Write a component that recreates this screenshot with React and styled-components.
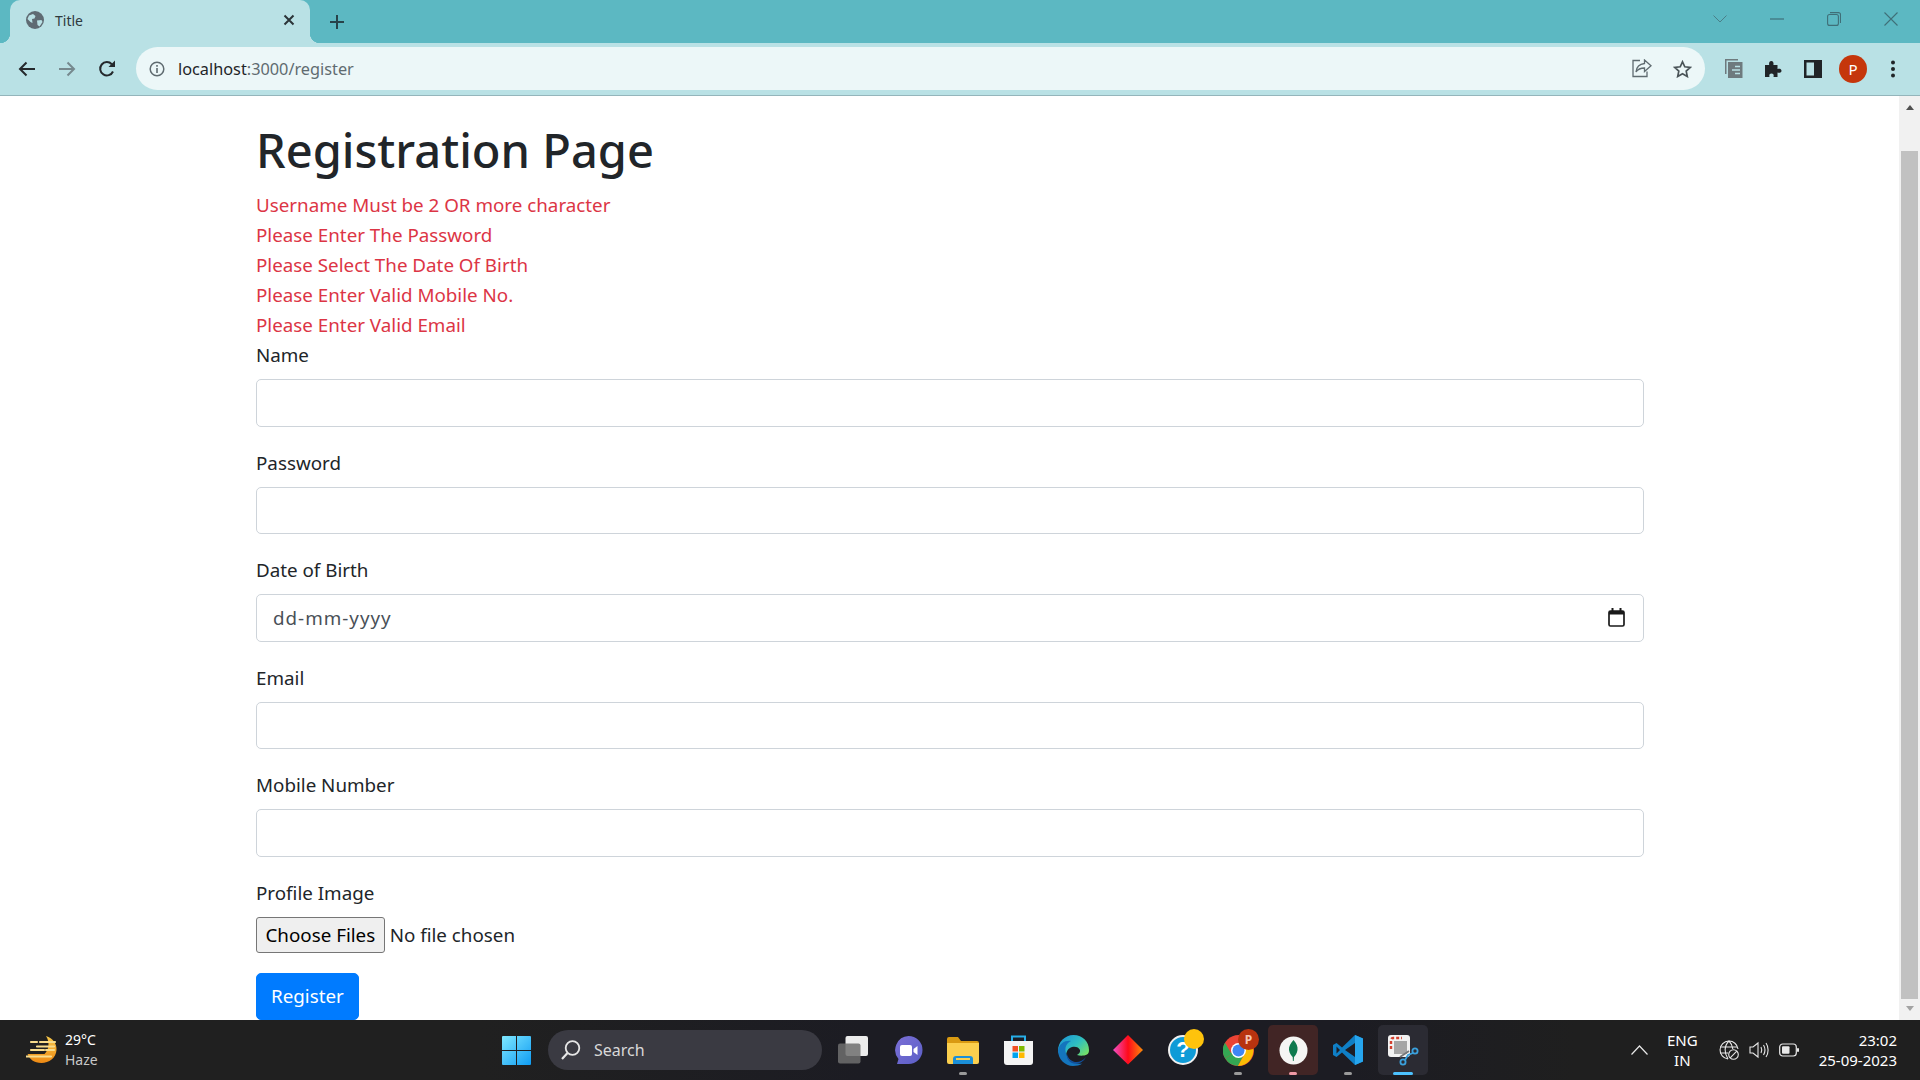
import React from "react";
import styled, { createGlobalStyle } from "styled-components";

const GlobalStyle = createGlobalStyle`
  html, body { margin: 0; padding: 0; height: 100%; overflow: hidden; }
  #root { height: 100%; }
  * { box-sizing: border-box; }
  body { font-family: "Noto Sans", "Open Sans", sans-serif; color: #212529; }
`;

const ui = `"Noto Sans", "Open Sans", sans-serif`;

const GlobeIcon = () => (
  <svg width="18" height="18" viewBox="0 0 18 18">
    <circle cx="9" cy="9" r="9" fill="#5f6b73" />
    <path d="M3 4.500 7 3l2.500 2-1 2.500-2.500.5L6.500 12 4.500 11 1.500 8zM11 9.500l4.500-.5 1 2-3 4.500-2-1.500z" fill="#b9e1e5" />
  </svg>
);
const CloseIcon = () => (
  <svg width="12" height="12" viewBox="0 0 12 12" stroke="#2b3438" strokeWidth="2">
    <path d="M1.500 1.500l9 9M10.500 1.500l-9 9" />
  </svg>
);
const PlusIcon = () => (
  <svg width="16" height="16" viewBox="0 0 16 16" stroke="#27434a" strokeWidth="2">
    <path d="M8 1v14M1 8h14" />
  </svg>
);
const ArrowIcon = ({ flip, color }) => (
  <svg width="18" height="16" viewBox="0 0 18 16" fill="none" stroke={color} strokeWidth="2" style={flip ? { transform: "scaleX(-1)" } : undefined}>
    <path d="M17 8H2M8.500 1.500 2 8l6.500 6.500" />
  </svg>
);
const ReloadIcon = () => (
  <svg width="18" height="18" viewBox="0 0 18 18" fill="none">
    <path d="M15 11.500A6.700 6.700 0 1 1 13.800 4.200" stroke="#25292c" strokeWidth="2" />
    <path d="M10.500 7H17V.5z" fill="#25292c" />
  </svg>
);
const InfoIcon = () => (
  <svg width="16" height="16" viewBox="0 0 16 16" fill="none">
    <circle cx="8" cy="8" r="6.800" stroke="#5f6b70" strokeWidth="1.500" />
    <path d="M8 7v5M8 4v1.800" stroke="#5f6b70" strokeWidth="1.600" />
  </svg>
);
const ShareIcon = () => (
  <svg width="20" height="19" viewBox="0 0 20 19" fill="none" stroke="#5f6b70" strokeWidth="1.300">
    <path d="M8 1.500H1v16h14v-5" />
    <path d="M12.500 1v3.500C7.500 5 4.500 8 4 13c2-3 4.500-4 8.500-4v3.500L19 6.800z" />
  </svg>
);
const StarIcon = () => (
  <svg width="19" height="18" viewBox="0 0 19 18" fill="none" stroke="#4a5458" strokeWidth="1.700">
    <path d="m9.500 1.800 2.300 5 5.400.6-4 3.700 1.100 5.400-4.800-2.700-4.800 2.700 1.100-5.400-4-3.700 5.400-.6z" />
  </svg>
);
const DocsIcon = () => (
  <svg width="19" height="21" viewBox="0 0 19 21">
    <path d="M1 1h13v1.500H2.500V16H1z" fill="#6e7a7e" />
    <path d="M4 4h14.500v16H4z" fill="#6e7a7e" />
    <path d="M11 8.500h5M8 12h8M11 15.500h5" stroke="#b9e1e5" strokeWidth="1.600" />
  </svg>
);
const PuzzleIcon = () => (
  <svg width="18" height="18" viewBox="0 0 18 18">
    <path d="M1 5h4.200C4.700 2.800 5.500 1 7.300 1s2.600 1.800 2.100 4H13.500v4c2-.6 4-.1 4 1.800s-2 2.400-4 1.800V17H9.500c.6-2-.2-3.400-2-3.400s-2.600 1.400-2 3.400H1z" fill="#202427" />
  </svg>
);
const PanelIcon = () => (
  <svg width="18" height="18" viewBox="0 0 18 18">
    <path d="M0 0h18v18H0zM2.500 2.500v13H10v-13z" fill="#202427" fillRule="evenodd" />
  </svg>
);
const KebabIcon = () => (
  <svg width="4" height="18" viewBox="0 0 4 18" fill="#202427">
    <circle cx="2" cy="2.500" r="2" />
    <circle cx="2" cy="9" r="2" />
    <circle cx="2" cy="15.500" r="2" />
  </svg>
);
const CalendarIcon = () => (
  <svg width="17" height="19" viewBox="0 0 17 19" fill="none">
    <rect x="1" y="3" width="15" height="15" rx="1.500" stroke="#1a1a1a" strokeWidth="1.700" />
    <path d="M1 3h15v3.500H1zM3.500 0h2v3h-2zM11.500 0h2v3h-2z" fill="#1a1a1a" />
  </svg>
);

const Chevron = () => (
  <svg width="14" height="8" viewBox="0 0 14 8" fill="none" stroke="#4a7f88" strokeWidth="1"><path d="m.5.5 6.500 6.500L13.500.5" /></svg>
);
const Minimize = () => (
  <svg width="14" height="2" viewBox="0 0 14 2" stroke="#3f6f78" strokeWidth="1.200"><path d="M0 1h14" /></svg>
);
const Restore = () => (
  <svg width="14" height="14" viewBox="0 0 14 14" fill="none" stroke="#3f6f78" strokeWidth="1.100">
    <rect x=".6" y="2.500" width="10.800" height="10.900" rx="2" />
    <path d="M3 .6h8.500a2 2 0 0 1 2 2V11" />
  </svg>
);
const CloseWin = () => (
  <svg width="14" height="14" viewBox="0 0 14 14" stroke="#3f6f78" strokeWidth="1.100"><path d="m.5.5 13 13M13.500.5l-13 13" /></svg>
);

const WeatherIcon = () => (
  <svg width="31" height="28" viewBox="0 0 31 28">
    <defs>
      <linearGradient id="moon" x1="0" y1="0" x2="0" y2="1">
        <stop offset="0" stopColor="#f7c84a" />
        <stop offset="1" stopColor="#ee8a14" />
      </linearGradient>
    </defs>
    <path d="M20 0c7 2 11 8 10.500 14C30 22 23 27 15.500 27 8 27 3.500 23 1.500 18h17C23 14 24 6 20 0z" fill="url(#moon)" />
    <path d="M5 6h6M14 6h15M11 10.500h17M5 14h13M20 14h8M0 20.500h25" stroke="#f8dc8c" strokeWidth="2.200" strokeLinecap="round" />
  </svg>
);
const WinLogo = () => (
  <svg width="29" height="29" viewBox="0 0 29 29">
    <defs>
      <linearGradient id="win" x1="0" y1="0" x2="1" y2="1">
        <stop offset="0" stopColor="#7fe8ff" />
        <stop offset="1" stopColor="#0f9cf3" />
      </linearGradient>
    </defs>
    <path d="M0 1a1 1 0 0 1 1-1h13v14H0zM15 0h13a1 1 0 0 1 1 1v13H15zM0 15h14v14H1a1 1 0 0 1-1-1zM15 15h14v13a1 1 0 0 1-1 1H15z" fill="url(#win)" />
  </svg>
);
const SearchGlass = () => (
  <svg width="20" height="20" viewBox="0 0 20 20" fill="none" stroke="#e6e6e6" strokeWidth="1.800">
    <circle cx="11.500" cy="8" r="6.800" />
    <path d="M6.500 13 1 19" strokeWidth="2.200" />
  </svg>
);
const TaskViewIcon = () => (
  <svg width="30" height="28" viewBox="0 0 30 28">
    <rect x="7.500" y="0" width="22.500" height="20" rx="2" fill="#ececec" />
    <rect x="0" y="7.500" width="22.500" height="20" rx="2" fill="#6e6e6e" fillOpacity=".85" />
  </svg>
);
const TeamsIcon = () => (
  <svg width="29" height="29" viewBox="0 0 29 29">
    <defs>
      <linearGradient id="teams" x1="0" y1="0" x2="1" y2="1">
        <stop offset="0" stopColor="#7b6fd6" />
        <stop offset="1" stopColor="#5b5fc7" />
      </linearGradient>
    </defs>
    <path d="M14.500 0a14 14 0 0 1 0 28H3l1.500-5A14 14 0 0 1 14.500 0z" fill="url(#teams)" />
    <rect x="6" y="9" width="12" height="11" rx="2" fill="#fff" />
    <path d="m19.500 13 4-3v9l-4-3z" fill="#fff" />
  </svg>
);
const FolderIcon = () => (
  <svg width="32" height="27" viewBox="0 0 32 27">
    <path d="M0 2a2 2 0 0 1 2-2h9l3 4h16a2 2 0 0 1 2 2v4H0z" fill="#d99a12" />
    <path d="M0 6h32v19a2 2 0 0 1-2 2H2a2 2 0 0 1-2-2z" fill="#fbcf4e" />
    <path d="M6 27v-5a3 3 0 0 1 3-3h14a3 3 0 0 1 3 3v5z" fill="#1b8fd8" />
    <path d="M9 22h14" stroke="#fbcf4e" strokeWidth="2" />
  </svg>
);
const StoreIcon = () => (
  <svg width="29" height="30" viewBox="0 0 29 30">
    <path d="M8 6V1.500h13V6" fill="none" stroke="#27aee8" strokeWidth="2" />
    <path d="M0 6h29v21a3 3 0 0 1-3 3H3a3 3 0 0 1-3-3z" fill="#f4f4f4" />
    <rect x="8.500" y="11" width="5.500" height="5.500" fill="#f25022" />
    <rect x="15" y="11" width="5.500" height="5.500" fill="#7fba00" />
    <rect x="8.500" y="17.500" width="5.500" height="5.500" fill="#00a4ef" />
    <rect x="15" y="17.500" width="5.500" height="5.500" fill="#ffb900" />
  </svg>
);
const EdgeIcon = () => (
  <svg width="31" height="31" viewBox="0 0 31 31">
    <defs>
      <linearGradient id="edgeTop" x1="0" y1="0" x2="1" y2=".8">
        <stop offset="0" stopColor="#1a8fd8" />
        <stop offset=".55" stopColor="#2fbfc0" />
        <stop offset="1" stopColor="#7de35e" />
      </linearGradient>
    </defs>
    <path d="M15.500 0C25 0 31 7 31 15c0 2-.5 3.500-2 4.500-3 1.500-7 1.500-10 .5 2-1 3.500-3 3-5-1-3-5-4-8-3-5 1.500-7 7-5 11.500C6 21 0 20 0 15.500 0 7 7 0 15.500 0z" fill="url(#edgeTop)" />
    <path d="M0 15.500C1 8 8 5 13 6c-4 2-6 5-5.500 10 .5 7 8 14 17 12.500-3 1.800-6 2.500-9.500 2.500C7 31 0 24 0 15.500z" fill="#1475bd" />
    <path d="M28 22c-3 6-9 8-14 6-4-2-6-6-5-10 0 4 3 8 8 9 4 .5 8-1 11-5z" fill="#114f9c" />
  </svg>
);
const DiamondIcon = () => (
  <svg width="30" height="30" viewBox="0 0 30 30">
    <defs>
      <linearGradient id="diamond" x1="0" y1="0" x2="1" y2="0">
        <stop offset="0" stopColor="#f050c8" />
        <stop offset=".5" stopColor="#ff0a1a" />
        <stop offset="1" stopColor="#f98c0a" />
      </linearGradient>
    </defs>
    <path d="M15 0 30 15 15 29.500 0 15z" fill="url(#diamond)" />
  </svg>
);
const ChromeIcon = () => (
  <svg width="31" height="31" viewBox="0 0 31 31">
    <circle cx="15.500" cy="15.500" r="15.500" fill="#ea4335" />
    <path d="M15.500 15.500 2 23.300A15.500 15.500 0 0 1 2 7.700L8 18z" fill="#34a853" />
    <path d="M2.100 23.300 15.500 15.500l6 3-6.500 12.500A15.500 15.500 0 0 1 2.100 23.300z" fill="#34a853" />
    <path d="M15.500 9h13.500A15.500 15.500 0 0 1 15 31l6.500-12z" fill="#fbbc04" />
    <circle cx="15.500" cy="15.500" r="7.500" fill="#fff" />
    <circle cx="15.500" cy="15.500" r="6" fill="#3f86f4" />
  </svg>
);
const LeafIcon = () => (
  <svg width="29" height="29" viewBox="0 0 29 29">
    <circle cx="14.500" cy="14.500" r="14" fill="#f5f5f3" />
    <path d="M14.500 4c3 3.500 4.500 6.500 4 10-.5 3.500-2.500 6-3.500 7l-.3 4h-.8l-.2-4c-1-1-3.200-3.500-3.700-7-.4-3.500 1.500-6.500 4.500-10z" fill="#0f7a4e" />
  </svg>
);
const VsCodeIcon = () => (
  <svg width="30" height="30" viewBox="0 0 30 30">
    <path d="M22 0 30 3.500v23L22 30 9 17.500 3.500 22 0 20v-10l3.500-2L9 12.500z" fill="#0f7fc6" />
    <path d="M22 8 12 15l10 7zM3.500 11.500v7L7 15z" fill="#1d1d24" />
    <path d="M22 0 30 3.500v23L22 30z" fill="#26a5ee" />
  </svg>
);
const SnipIcon = () => (
  <svg width="31" height="31" viewBox="0 0 31 31" fill="none">
    <rect x="0" y="0" width="22" height="22" rx="3" fill="#f2f2f2" />
    <path d="M3 14V5a2 2 0 0 1 2-2h9" stroke="#d2402f" strokeWidth="2.400" strokeDasharray="3 2" />
    <rect x="6" y="6" width="13" height="13" fill="#a6a6a6" />
    <path d="m12 22 9-6" stroke="#777" strokeWidth="1.800" />
    <circle cx="27" cy="16" r="2.600" stroke="#3aa0dc" strokeWidth="1.800" />
    <circle cx="15" cy="27" r="2.600" stroke="#3aa0dc" strokeWidth="1.800" />
    <path d="m25 18-5 2-3 5" stroke="#3aa0dc" strokeWidth="1.800" />
  </svg>
);
const TrayUp = () => (
  <svg width="17" height="10" viewBox="0 0 17 10" fill="none" stroke="#e8e8e8" strokeWidth="1.200"><path d="m.5 9.500 8-8.500 8 8.500" /></svg>
);
const GlobeOff = () => (
  <svg width="20" height="20" viewBox="0 0 20 20" fill="none" stroke="#e8e8e8" strokeWidth="1.100">
    <path d="M9 19A9 9 0 1 1 19 9" />
    <path d="M1 7h17M1 13h8M10 1c-5 5-5 12-1 18M10 1c2.500 2.500 3.500 5 3.800 8" />
    <circle cx="14.500" cy="14.500" r="4.800" fill="#1e1e1e" />
    <path d="m11.200 17.800 6.600-6.600" />
  </svg>
);
const Speaker = () => (
  <svg width="20" height="18" viewBox="0 0 20 18" fill="none" stroke="#e8e8e8" strokeWidth="1.100">
    <path d="M1 6v6h3l5 4V2L4 6z" />
    <path d="M12 6c1 2 1 4 0 6M14.500 4c1.800 3 1.800 7 0 10M17 2c2.800 4 2.800 10 0 14" />
  </svg>
);
const Battery = () => (
  <svg width="20" height="14" viewBox="0 0 20 14" fill="none">
    <rect x=".7" y="1" width="16.600" height="12" rx="3" stroke="#e8e8e8" strokeWidth="1.200" />
    <rect x="3" y="3.300" width="7.500" height="7.400" rx="1" fill="#e8e8e8" />
    <rect x="18" y="5" width="2" height="4" rx="1" fill="#e8e8e8" />
  </svg>
);

const fields = ["Name", "Password", "Date of Birth", "Email", "Mobile Number"];
const errors = [
  "Username Must be 2 OR more character",
  "Please Enter The Password",
  "Please Select The Date Of Birth",
  "Please Enter Valid Mobile No.",
  "Please Enter Valid Email",
];

const App = () => {
  const taskItems = [
    { icon: <TaskViewIcon /> },
    { icon: <TeamsIcon /> },
    { icon: <FolderIcon />, dot: "#9a9a9a" },
    { icon: <StoreIcon /> },
    { icon: <EdgeIcon /> },
    { icon: <DiamondIcon /> },
    { icon: <HelpCircle>?</HelpCircle>, badge: <YellowBadge /> },
    { icon: <ChromeIcon />, dot: "#9a9a9a", badge: <ProfileBadge>P</ProfileBadge> },
    { icon: <LeafIcon />, dot: "#ee9aa6", tint: "#412525" },
    { icon: <VsCodeIcon />, dot: "#9a9a9a" },
    { icon: <SnipIcon />, dot: "#4cc2ff", wide: true, tint: "#2b2b33" },
  ];

  return (
    <Screen>
      <GlobalStyle />
      <TabStrip>
        <Tab>
          <GlobeIcon />
          <TabTitle>Title</TabTitle>
          <CloseIcon />
        </Tab>
        <NewTab><PlusIcon /></NewTab>
        <WindowControls>
          <WinButton><Chevron /></WinButton>
          <WinButton><Minimize /></WinButton>
          <WinButton><Restore /></WinButton>
          <WinButton><CloseWin /></WinButton>
        </WindowControls>
      </TabStrip>
      <Toolbar>
        <NavButton><ArrowIcon color="#25292c" /></NavButton>
        <NavButton><ArrowIcon flip color="#76898e" /></NavButton>
        <NavButton><ReloadIcon /></NavButton>
        <Omnibox>
          <InfoIcon />
          <Url>localhost<UrlRest>:3000/register</UrlRest></Url>
          <NavButton><ShareIcon /></NavButton>
          <NavButton><StarIcon /></NavButton>
        </Omnibox>
        <Extensions>
          <NavButton><DocsIcon /></NavButton>
          <NavButton><PuzzleIcon /></NavButton>
          <NavButton><PanelIcon /></NavButton>
          <NavButton><Avatar>P</Avatar></NavButton>
          <NavButton><KebabIcon /></NavButton>
        </Extensions>
      </Toolbar>
      <Viewport>
        <Page>
          <Heading>Registration Page</Heading>
          {errors.map((err) => (
            <ErrorLine key={err}>{err}</ErrorLine>
          ))}
          {fields.map((name) => (
            <Group key={name}>
              <Label>{name}</Label>
              {name === "Date of Birth" ? (
                <DateBox>
                  <DateText>dd-mm-yyyy</DateText>
                  <CalendarIcon />
                </DateBox>
              ) : (
                <Input type={name === "Password" ? "password" : "text"} />
              )}
            </Group>
          ))}
          <Group>
            <Label>Profile Image</Label>
            <FileRow>
              <FileButton type="button">Choose Files</FileButton>
              <span>No file chosen</span>
            </FileRow>
          </Group>
          <Submit type="button">Register</Submit>
        </Page>
        <Scrollbar>
          <ScrollArrow />
          <ScrollThumb />
          <ScrollArrow $down />
        </Scrollbar>
      </Viewport>
      <Taskbar>
        <Weather>
          <WeatherIcon />
          <WeatherText>
            <span>29°C</span>
            <WeatherSub>Haze</WeatherSub>
          </WeatherText>
        </Weather>
        <Tile><WinLogo /></Tile>
        <SearchPill>
          <SearchGlass />
          <span>Search</span>
        </SearchPill>
        <Tiles>
          {taskItems.map((item, i) => (
            <Tile key={i} $tint={item.tint}>
              {item.icon}
              {item.badge}
              {item.dot && <Dot $color={item.dot} $wide={item.wide} />}
            </Tile>
          ))}
        </Tiles>
        <Tray>
          <TrayUp />
          <Lang>
            <span>ENG</span>
            <span>IN</span>
          </Lang>
          <TrayIcons>
            <GlobeOff />
            <Speaker />
            <Battery />
          </TrayIcons>
          <Clock>
            <span>23:02</span>
            <span>25-09-2023</span>
          </Clock>
        </Tray>
      </Taskbar>
    </Screen>
  );
};

const Screen = styled.div`
  height: 100vh;
  display: flex;
  flex-direction: column;
  overflow: hidden;
  background: #fff;
`;

const TabStrip = styled.div`
  height: 43px;
  flex: none;
  display: flex;
  align-items: flex-end;
  padding-left: 10px;
  background: #5cb8c2;
`;

const Tab = styled.div`
  position: relative;
  width: 300px;
  height: 43px;
  padding: 0 15px 3px 16px;
  display: flex;
  align-items: center;
  gap: 11px;
  background: #b9e1e5;
  border-radius: 10px 10px 0 0;
  font-family: ${ui};
  font-size: 14px;
  color: #2f3a3e;

  &::before,
  &::after {
    content: "";
    position: absolute;
    bottom: 0;
    width: 10px;
    height: 10px;
  }
  &::before {
    left: -10px;
    background: radial-gradient(circle at 0 0, transparent 10px, #b9e1e5 10.5px);
  }
  &::after {
    right: -10px;
    background: radial-gradient(circle at 100% 0, transparent 10px, #b9e1e5 10.5px);
  }
`;

const TabTitle = styled.span`
  flex: 1;
`;

const NewTab = styled.div`
  width: 40px;
  height: 40px;
  margin-left: 7px;
  display: flex;
  align-items: center;
  justify-content: center;
  padding-bottom: 2px;
`;

const WindowControls = styled.div`
  margin-left: auto;
  padding-right: 1px;
  align-self: flex-start;
  display: flex;
`;

const WinButton = styled.div`
  width: 57px;
  height: 37px;
  display: flex;
  align-items: center;
  justify-content: center;
`;

const Toolbar = styled.div`
  height: 53px;
  flex: none;
  display: flex;
  align-items: center;
  padding: 0 7px 1px;
  background: #b9e1e5;
  border-bottom: 1px solid #94b5bb;
`;

const NavButton = styled.div`
  width: 40px;
  height: 40px;
  flex: none;
  display: flex;
  align-items: center;
  justify-content: center;
`;

const Omnibox = styled.div`
  flex: 1;
  height: 43px;
  margin-left: 9px;
  padding: 0 3px 0 13px;
  display: flex;
  align-items: center;
  background: #ecf7f8;
  border-radius: 22px;
`;

const Url = styled.div`
  flex: 1;
  margin-left: 13px;
  padding-top: 1px;
  font-family: ${ui};
  font-size: 16.300px;
  color: #1f2528;
`;

const UrlRest = styled.span`
  color: #5f6b70;
`;

const Extensions = styled.div`
  display: flex;
  margin-left: 8px;
`;

const Avatar = styled.div`
  width: 28px;
  height: 28px;
  border-radius: 50%;
  display: flex;
  align-items: center;
  justify-content: center;
  background: #c5360b;
  color: #fff;
  font-family: ${ui};
  font-size: 15px;
`;

const Viewport = styled.div`
  flex: 1;
  min-height: 0;
  display: flex;
  overflow: hidden;
`;

const Page = styled.div`
  flex: 1;
  min-width: 0;
  padding: 24px 255px 0 256px;
  font-size: 18.800px;
  line-height: 30px;
`;

const Heading = styled.h1`
  margin: 0 0 10px;
  font-size: 47px;
  font-weight: 500;
  line-height: 60px;
`;

const ErrorLine = styled.div`
  color: #dc3545;
`;

const Group = styled.div`
  margin-bottom: 21px;
`;

const Label = styled.label`
  display: block;
  margin-bottom: 9px;
`;

const Input = styled.input`
  display: block;
  width: 100%;
  height: 47.500px;
  padding: 0 16px;
  border: 1px solid #ced4da;
  border-radius: 5px;
  background: #fff;
  outline: none;
`;

const DateBox = styled.div`
  width: 100%;
  height: 47.500px;
  padding: 0 18px 0 16px;
  display: flex;
  align-items: center;
  justify-content: space-between;
  border: 1px solid #ced4da;
  border-radius: 5px;
  color: #495057;
`;

const DateText = styled.span`
  letter-spacing: 1px;
`;

const FileRow = styled.div`
  display: flex;
  align-items: center;
  gap: 5px;
  height: 36px;
`;

const FileButton = styled.button`
  height: 36px;
  padding: 0 8.500px;
  border: 1px solid #767676;
  border-radius: 3px;
  background: #efefef;
  color: #000;
  font: inherit;
`;

const Submit = styled.button`
  display: block;
  height: 47.500px;
  margin-top: -1px;
  padding: 0 14px;
  border: 1px solid #007bff;
  border-radius: 5px;
  background: #007bff;
  color: #fff;
  font: inherit;
`;

const Scrollbar = styled.div`
  width: 21px;
  flex: none;
  display: flex;
  flex-direction: column;
  align-items: center;
  background: #f1f1f1;
`;

const ScrollArrow = styled.div`
  flex: none;
  width: 0;
  height: 0;
  border-left: 4.500px solid transparent;
  border-right: 4.500px solid transparent;
  ${(p) =>
    p.$down
      ? "margin: 7px 0 9px; border-top: 5px solid #a3a3a3;"
      : "margin: 9px 0; border-bottom: 5px solid #505050;"}
`;

const ScrollThumb = styled.div`
  flex: 1;
  width: 17px;
  margin-top: 32px;
  background: #c1c1c1;
`;

const Taskbar = styled.div`
  height: 60px;
  flex: none;
  display: flex;
  align-items: center;
  background: linear-gradient(90deg, #202020 0 25%, #1c1c23 45%, #1c1c23 70%, #1f1f1f 82%);
  font-family: ${ui};
  color: #fff;
`;

const Weather = styled.div`
  width: 491px;
  flex: none;
  padding-left: 26px;
  display: flex;
  align-items: center;
  gap: 8px;
`;

const WeatherText = styled.div`
  display: flex;
  flex-direction: column;
  font-size: 14px;
  line-height: 20px;
`;

const WeatherSub = styled.span`
  color: #c8c8c8;
`;

const Tile = styled.div`
  position: relative;
  width: 50px;
  height: 50px;
  flex: none;
  display: flex;
  align-items: center;
  justify-content: center;
  border-radius: 5px;
  background: ${(p) => p.$tint || "transparent"};
`;

const Tiles = styled.div`
  display: flex;
  gap: 5px;
  margin-left: 6px;
`;

const Dot = styled.div`
  position: absolute;
  bottom: 0;
  left: 50%;
  width: ${(p) => (p.$wide ? "20px" : "8px")};
  height: 3px;
  transform: translateX(-50%);
  border-radius: 2px;
  background: ${(p) => p.$color};
`;

const HelpCircle = styled.div`
  width: 30px;
  height: 30px;
  display: flex;
  align-items: center;
  justify-content: center;
  border: 2px solid #f0f0f0;
  border-radius: 50%;
  background: #0f9bd7;
  color: #fff;
  font-family: "Liberation Sans", sans-serif;
  font-size: 22px;
  font-weight: 700;
`;

const YellowBadge = styled.div`
  position: absolute;
  top: 4px;
  right: 4px;
  width: 20px;
  height: 20px;
  border-radius: 50%;
  background: #fec30c;
`;

const ProfileBadge = styled.div`
  position: absolute;
  top: 4px;
  right: 4px;
  width: 21px;
  height: 21px;
  display: flex;
  align-items: center;
  justify-content: center;
  border-radius: 50%;
  background: #b8330f;
  color: #f6c4b2;
  font-size: 12px;
  font-weight: 700;
`;

const SearchPill = styled.div`
  width: 274px;
  height: 40px;
  flex: none;
  margin-left: 7px;
  padding-left: 13px;
  display: flex;
  align-items: center;
  gap: 13px;
  border-radius: 20px;
  background: #3a3a42;
  color: #d8d8d8;
  font-size: 16px;
`;

const Tray = styled.div`
  margin-left: auto;
  padding-right: 23px;
  display: flex;
  align-items: center;
`;

const Lang = styled.div`
  margin-left: 19px;
  display: flex;
  flex-direction: column;
  align-items: center;
  line-height: 20px;
  font-size: 15px;
`;

const TrayIcons = styled.div`
  margin-left: 21px;
  display: flex;
  align-items: center;
  gap: 10px;
`;

const Clock = styled.div`
  margin-left: 20px;
  display: flex;
  flex-direction: column;
  align-items: flex-end;
  line-height: 20px;
  font-size: 15px;
`;

export default App;
